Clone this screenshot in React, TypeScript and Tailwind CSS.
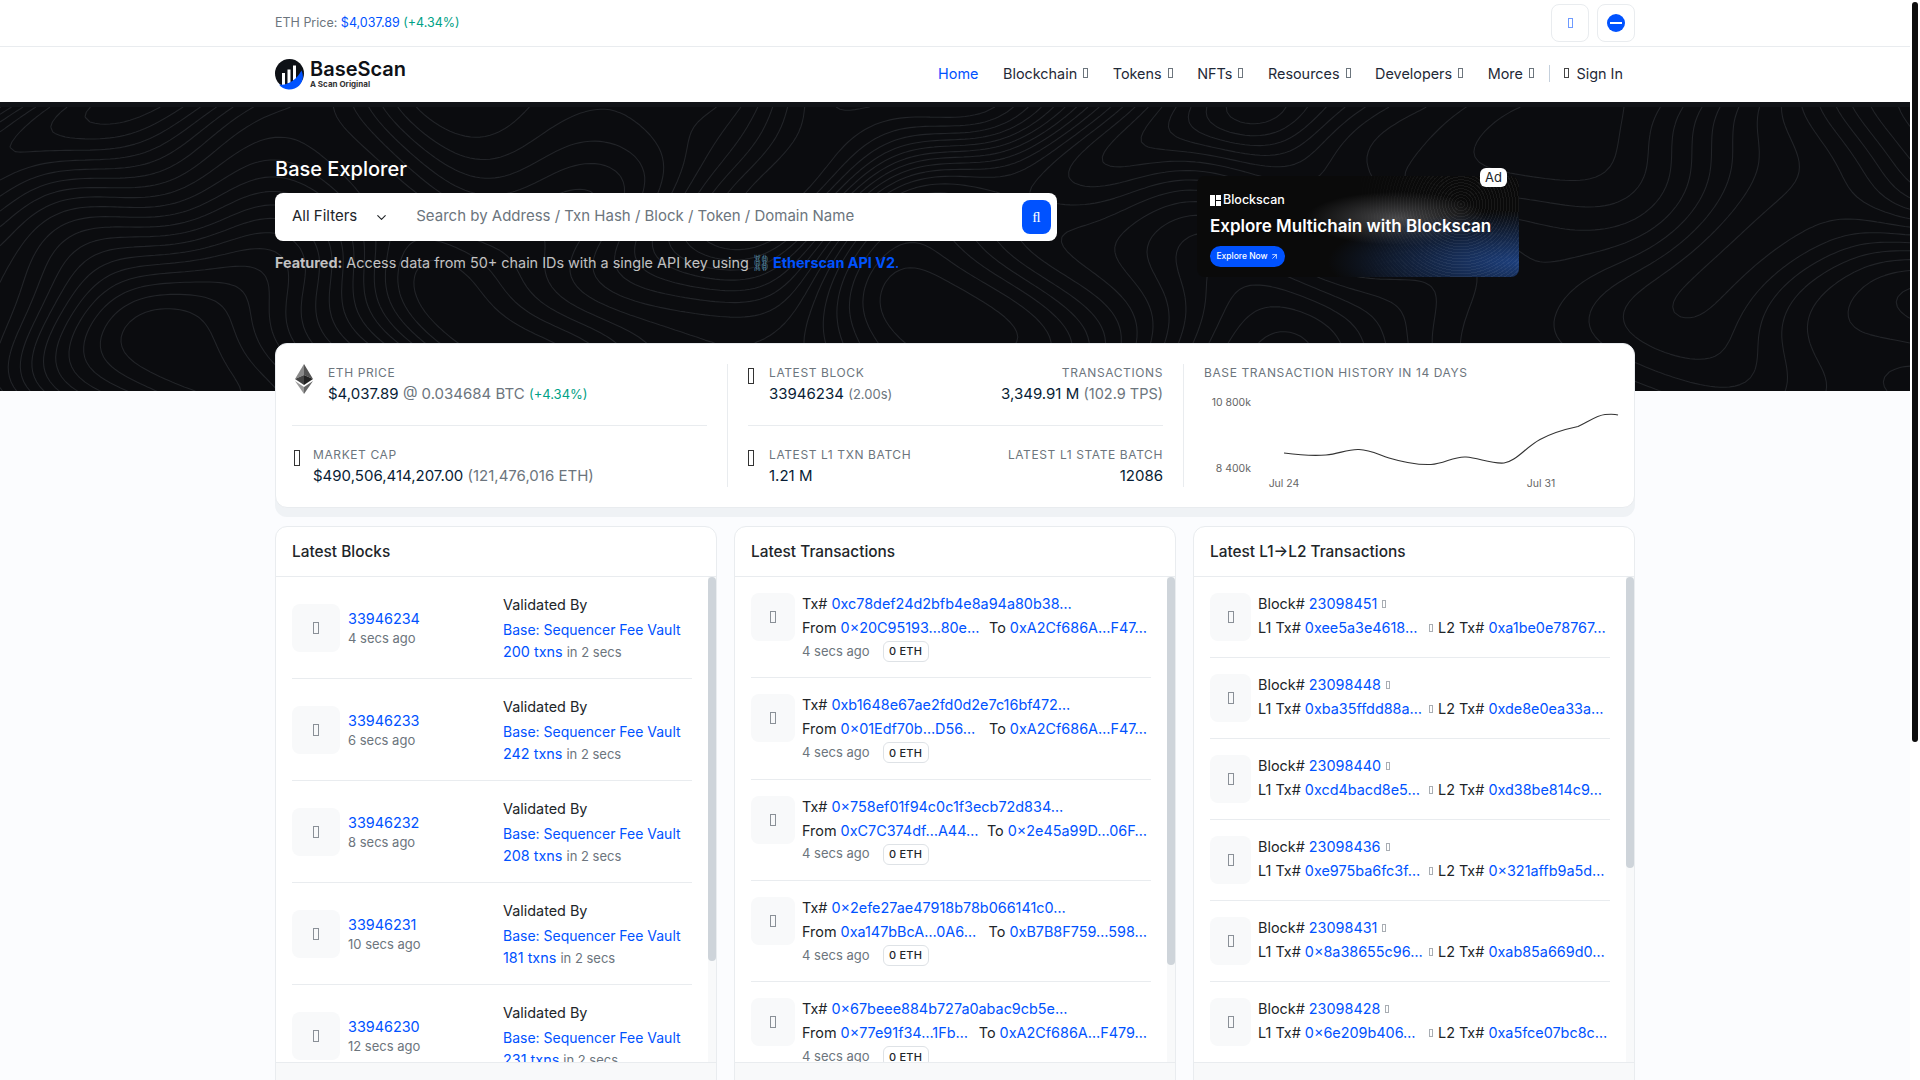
import { useMemo } from 'react';
import { ChevronDown, ArrowUpRight } from 'lucide-react';

const BLOCKS = [
  { no: '33946234', ago: '4 secs ago', txns: '200 txns' },
  { no: '33946233', ago: '6 secs ago', txns: '242 txns' },
  { no: '33946232', ago: '8 secs ago', txns: '208 txns' },
  { no: '33946231', ago: '10 secs ago', txns: '181 txns' },
  { no: '33946230', ago: '12 secs ago', txns: '231 txns' },
];

const TXS = [
  { hash: '0xc78def24d2bfb4e8a94a80b38…', from: '0×20C95193…80e…', to: '0xA2Cf686A…F47…' },
  { hash: '0xb1648e67ae2fd0d2e7c16bf472…', from: '0×01Edf70b…D56…', to: '0xA2Cf686A…F47…' },
  { hash: '0×758ef01f94c0c1f3ecb72d834…', from: '0xC7C374df…A44…', to: '0×2e45a99D…06F…' },
  { hash: '0×2efe27ae47918b78b066141c0…', from: '0xa147bBcA…0A6…', to: '0xB7B8F759…598…' },
  { hash: '0×67beee884b727a0abac9cb5e…', from: '0×77e91f34…1Fb…', to: '0xA2Cf686A…F479…' },
];

const L1L2 = [
  { block: '23098451', l1: '0xee5a3e4618…', l2: '0xa1be0e78767…' },
  { block: '23098448', l1: '0xba35ffdd88a…', l2: '0xde8e0ea33a…' },
  { block: '23098440', l1: '0xcd4bacd8e5…', l2: '0xd38be814c9…' },
  { block: '23098436', l1: '0xe975ba6fc3f…', l2: '0×321affb9a5d…' },
  { block: '23098431', l1: '0×8a38655c96…', l2: '0xab85a669d0…' },
  { block: '23098428', l1: '0×6e209b406…', l2: '0xa5fce07bc8c…' },
];

const NAV = ['Blockchain', 'Tokens', 'NFTs', 'Resources', 'Developers', 'More'];

// missing icon font glyph, shows up as an empty box in the page
function Tofu({ className }: { className: string }) {
  return <span className={`inline-block shrink-0 border ${className}`} />;
}

function IconBox({ className }: { className: string }) {
  return (
    <div className={`flex h-12 shrink-0 items-center justify-center rounded-lg bg-[#f8f9fa] ${className}`}>
      <Tofu className="h-[12px] w-[6px] border-[#8a9097]" />
    </div>
  );
}

function Logo() {
  return (
    <div className="flex items-center gap-[5px]">
      <svg width="30" height="31" viewBox="0 0 30 31" className="shrink-0">
        <circle cx="14.500" cy="14.500" r="14.500" fill="#0e1116" />
        <rect x="7" y="14" width="3" height="12" fill="#fff" />
        <rect x="12.500" y="10.500" width="3" height="14" fill="#fff" />
        <rect x="18" y="6.500" width="3" height="15" fill="#fff" />
        <path d="M4 25.500C13 27 22 20 26.500 11.500C31 21 24 31 13.500 30.500C9.500 30.200 6 28.200 4 25.500Z" fill="#0052ff" />
      </svg>
      <div className="-mt-[2px] flex flex-col">
        <span className="text-[20px] leading-[20px] font-semibold text-[#0e1116]">BaseScan</span>
        <span className="text-[8px] leading-[10px] font-bold text-[#333]">A Scan Original</span>
      </div>
    </div>
  );
}

// contour lines of a made up height field, walks the grid with marching squares
function useContours(width: number, height: number) {
  return useMemo(() => {
    const field = (x: number, y: number) => {
      const wx = x + 70 * Math.sin(y / 90) + 40 * Math.sin(y / 37 + x / 210);
      const wy = y + 60 * Math.sin(x / 120) + 26 * Math.cos(x / 47 - y / 160);
      return (
        2.4 * Math.sin(wx / 170) * Math.cos(wy / 110) +
        1.6 * Math.sin(wx / 83 + wy / 131) +
        1.1 * Math.cos(wy / 61 - wx / 240)
      );
    };
    const step = 5;
    const paths: string[] = [];
    for (let level = -4.5; level <= 4.5; level += 0.45) {
      let d = '';
      for (let x = 0; x < width; x += step) {
        for (let y = 0; y < height; y += step) {
          const a = field(x, y) - level;
          const b = field(x + step, y) - level;
          const c = field(x + step, y + step) - level;
          const e = field(x, y + step) - level;
          const pts: [number, number][] = [];
          if (a * b < 0) pts.push([x + (step * a) / (a - b), y]);
          if (b * c < 0) pts.push([x + step, y + (step * b) / (b - c)]);
          if (c * e < 0) pts.push([x + (step * e) / (e - c), y + step]);
          if (e * a < 0) pts.push([x, y + (step * a) / (a - e)]);
          if (pts.length >= 2) {
            d += `M${pts[0][0].toFixed(1)} ${pts[0][1].toFixed(1)}L${pts[1][0].toFixed(1)} ${pts[1][1].toFixed(1)}`;
          }
        }
      }
      paths.push(d);
    }
    return paths;
  }, [width, height]);
}

function Contours() {
  const paths = useContours(1910, 289);
  return (
    <svg width="1910" height="289" viewBox="0 0 1910 289" className="absolute inset-0" fill="none">
      {paths.map((d, i) => (
        <path key={i} d={d} stroke="#222428" strokeWidth="1.1" />
      ))}
    </svg>
  );
}

function EthLogo() {
  return (
    <svg width="18" height="30" viewBox="0 0 18 30" className="shrink-0">
      <polygon points="9,0 0,15 9,11" fill="#8a8a8a" />
      <polygon points="9,0 18,15 9,11" fill="#555" />
      <polygon points="0,15 9,21 9,11" fill="#444" />
      <polygon points="18,15 9,21 9,11" fill="#222" />
      <polygon points="0,17 9,30 9,23" fill="#9a9a9a" />
      <polygon points="18,17 9,30 9,23" fill="#666" />
    </svg>
  );
}

function Label({ children }: { children: React.ReactNode }) {
  return <div className="text-[12px] leading-[18px] tracking-[0.05em] text-[#6c757d] uppercase">{children}</div>;
}

function Chart() {
  return (
    <svg width="416" height="112" viewBox="0 0 416 112" className="mt-[3px] block">
      <text x="47" y="21" textAnchor="end" fontSize="10.5" fill="#666" fontFamily="Inter, sans-serif">10 800k</text>
      <text x="47" y="87" textAnchor="end" fontSize="10.5" fill="#666" fontFamily="Inter, sans-serif">8 400k</text>
      <text x="80" y="102" textAnchor="middle" fontSize="10.5" fill="#666" fontFamily="Inter, sans-serif">Jul 24</text>
      <text x="337" y="102" textAnchor="middle" fontSize="10.5" fill="#666" fontFamily="Inter, sans-serif">Jul 31</text>
      <path
        d="M80 68C95 70 110 71 122 70C135 69 143 64 155 64.500C167 65 175 70 185 73C200 77.500 215 80 227 79.500C240 79 250 71 262 72C275 73 287 79 300 78C312 76.500 322 62 336 54.500C348 48 362 44 374 41.500C385 36 394 30 401 29.500C407 29 411 29 414 30"
        fill="none"
        stroke="#333"
        strokeWidth="1.1"
      />
    </svg>
  );
}

function StatsCard() {
  return (
    <div className="relative -mt-[48px] flex h-[165px] rounded-xl border border-[#e9ecef] bg-white py-[20px] pl-[16px] shadow-[0_9px_0_#eff2f5]">
      <div className="flex w-[436px] shrink-0 flex-col border-r border-[#e9ecef] pr-[20px]">
        <div className="flex h-[66px] gap-[15px] border-b border-[#e9ecef]">
          <div className="pl-[3px]">
            <EthLogo />
          </div>
          <div>
            <Label>ETH Price</Label>
            <div className="mt-[1px] text-[15px] leading-[22px] text-[#6c757d]">
              <span className="text-[#081d35]">$4,037.89</span> @ 0.034684 BTC{' '}
              <span className="text-[13px] text-[#00a186]">(+4.34%)</span>
            </div>
          </div>
        </div>
        <div className="flex gap-[13px] pt-[20px]">
          <Tofu className="mt-[4px] ml-[2px] h-[16px] w-[6px] border-[#333]" />
          <div>
            <Label>Market Cap</Label>
            <div className="mt-[1px] text-[15px] leading-[22px] text-[#6c757d]">
              <span className="text-[#081d35]">$490,506,414,207.00</span> (121,476,016 ETH)
            </div>
          </div>
        </div>
      </div>
      <div className="flex w-[456px] shrink-0 flex-col border-r border-[#e9ecef] px-[20px]">
        <div className="flex h-[66px] justify-between border-b border-[#e9ecef]">
          <div className="flex gap-[15px]">
            <Tofu className="mt-[4px] h-[16px] w-[6px] border-[#333]" />
            <div>
              <Label>Latest Block</Label>
              <div className="mt-[1px] text-[15px] leading-[22px] text-[#081d35]">
                33946234 <span className="text-[13px] text-[#6c757d]">(2.00s)</span>
              </div>
            </div>
          </div>
          <div className="text-right">
            <Label>Transactions</Label>
            <div className="mt-[1px] text-[15px] leading-[22px] text-[#081d35]">
              3,349.91 M <span className="text-[14.5px] text-[#6c757d]">(102.9 TPS)</span>
            </div>
          </div>
        </div>
        <div className="flex justify-between pt-[20px]">
          <div className="flex gap-[15px]">
            <Tofu className="mt-[4px] h-[16px] w-[6px] border-[#333]" />
            <div>
              <Label>Latest L1 Txn Batch</Label>
              <div className="mt-[1px] text-[15px] leading-[22px] text-[#081d35]">1.21 M</div>
            </div>
          </div>
          <div className="text-right">
            <Label>Latest L1 State Batch</Label>
            <div className="mt-[1px] text-[15px] leading-[22px] text-[#081d35]">12086</div>
          </div>
        </div>
      </div>
      <div className="min-w-0 flex-1 pl-[20px]">
        <Label>Base Transaction History in 14 Days</Label>
        <Chart />
      </div>
    </div>
  );
}

function PanelCard({ title, thumb, children }: { title: string; thumb: string; children: React.ReactNode }) {
  return (
    <div className="overflow-hidden rounded-t-xl border border-[#e9ecef] bg-white">
      <div className="flex h-[50px] items-center border-b border-[#e9ecef] px-4 text-[15.4px] font-medium text-[#212529]">
        {title}
      </div>
      <div className="flex h-[485px]">
        <div className="min-w-0 flex-1 overflow-hidden px-4">{children}</div>
        <div className="w-[8px] shrink-0 bg-[#f8f9fa]">
          <div className={`w-[8px] rounded-full bg-[#ced4da] ${thumb}`} />
        </div>
      </div>
      <div className="h-[48px] border-t border-[#e9ecef] bg-[#f8f9fa]" />
    </div>
  );
}

function BlockRow({ no, ago, txns }: { no: string; ago: string; txns: string }) {
  return (
    <div className="flex h-[102px] items-center border-b border-[#e9ecef]">
      <div className="flex w-[211px] shrink-0 items-center gap-[8px]">
        <IconBox className="w-12" />
        <div>
          <div className="pt-[1px] text-[14.4px] leading-[20px] text-[#0052ff]">{no}</div>
          <div className="text-[13px] leading-[19px] text-[#6c757d]">{ago}</div>
        </div>
      </div>
      <div className="pt-[1px]">
        <div className="text-[14.4px] leading-[24px] text-[#212529]">Validated By</div>
        <div className="mt-[2px] text-[14px] leading-[22px] text-[#0052ff]">Base: Sequencer Fee Vault</div>
        <div className="text-[14.4px] leading-[22px] text-[#0052ff]">
          {txns} <span className="text-[13px] text-[#6c757d]">in 2 secs</span>
        </div>
      </div>
    </div>
  );
}

function TxRow({ hash, from, to }: { hash: string; from: string; to: string }) {
  return (
    <div className="flex h-[101.33px] gap-[7px] border-b border-[#e9ecef] pt-4">
      <IconBox className="w-[44px]" />
      <div className="min-w-0 flex-1 pr-[4px]">
        <div className="h-[22px] text-[14.4px] leading-[22px] text-[#212529]">
          Tx# <span className="text-[#0052ff]">{hash}</span>
        </div>
        <div className="flex h-[25px] justify-between text-[14.4px] leading-[25px] whitespace-nowrap text-[#212529]">
          <span>
            From <span className="text-[#0052ff]">{from}</span>
          </span>
          <span>
            To <span className="text-[#0052ff]">{to}</span>
          </span>
        </div>
        <div className="flex h-[23px] items-center gap-[13px]">
          <span className="text-[13px] text-[#6c757d]">4 secs ago</span>
          <span className="flex h-[21px] w-[46px] items-center justify-center rounded-md border border-[#dee2e6] text-[11px] font-medium tracking-[0.02em] text-[#212529]">
            0 ETH
          </span>
        </div>
      </div>
    </div>
  );
}

function L1L2Row({ block, l1, l2 }: { block: string; l1: string; l2: string }) {
  return (
    <div className="flex h-[81px] gap-[7px] border-b border-[#e9ecef] pt-4">
      <IconBox className="w-[41px]" />
      <div className="min-w-0 flex-1">
        <div className="flex h-[22px] items-center gap-[5px] text-[14.4px] leading-[22px] text-[#212529]">
          <span>
            Block# <span className="text-[#0052ff]">{block}</span>
          </span>
          <Tofu className="h-[8px] w-[4px] border-[#a8adb3]" />
        </div>
        <div className="flex h-[25px] items-center text-[14.4px] leading-[25px] whitespace-nowrap text-[#212529]">
          <span className="w-[171px] shrink-0">
            L1 Tx# <span className="text-[#0052ff]">{l1}</span>
          </span>
          <Tofu className="mr-[5px] h-[8px] w-[4px] border-[#a8adb3]" />
          <span>
            L2 Tx# <span className="text-[#0052ff]">{l2}</span>
          </span>
        </div>
      </div>
    </div>
  );
}

export default function App() {
  return (
    <div className="flex h-screen overflow-hidden bg-white font-['Inter',sans-serif]">
      <div className="h-full min-w-0 flex-1 overflow-hidden bg-[#fbfcfe]">
        {/* top bar */}
        <div className="h-[47px] border-b border-[#e9ecef] bg-white">
          <div className="mx-auto flex h-[46px] w-[1360px] items-center justify-between">
            <div className="text-[12.5px] text-[#6c757d]">
              ETH Price: <span className="text-[#0052ff]">$4,037.89</span>{' '}
              <span className="text-[#00a186]">(+4.34%)</span>
            </div>
            <div className="flex gap-[8px]">
              <div className="flex h-[38px] w-[38px] items-center justify-center rounded-lg border border-[#e9ecef]">
                <Tofu className="h-[10px] w-[5px] border-[#6f9bff]" />
              </div>
              <div className="flex h-[38px] w-[38px] items-center justify-center rounded-lg border border-[#e9ecef]">
                <div className="flex h-[18px] w-[18px] items-center justify-center rounded-full bg-[#0052ff]">
                  <div className="h-[2px] w-[12px] bg-white" />
                </div>
              </div>
            </div>
          </div>
        </div>

        {/* main nav */}
        <div className="h-[55px] bg-white">
          <div className="mx-auto flex h-full w-[1360px] items-center justify-between pr-[12px]">
            <Logo />
            <div className="-mt-[2px] flex items-center gap-[24.6px] text-[14.4px] text-[#1f2937]">
              <span className="text-[#0052ff]">Home</span>
              {NAV.map((item) => (
                <span key={item} className="flex items-center gap-[6px]">
                  {item}
                  <Tofu className="h-[10px] w-[5px] border-[#6c757d]" />
                </span>
              ))}
              <span className="-ml-[10px] flex items-center">
                <span className="h-[17px] border-l border-[#c5d0dc]" />
                <Tofu className="mr-[8px] ml-[14px] h-[10px] w-[5px] border-[#444]" />
                Sign In
              </span>
            </div>
          </div>
        </div>

        {/* hero */}
        <div className="relative h-[289px] overflow-hidden border-t-[5px] border-[#111317] bg-[#0b0c0f]">
          <Contours />
          <div className="relative mx-auto flex w-[1360px] pt-[48px]">
            <div className="w-[782px] shrink-0">
              <h1 className="h-[28px] text-[20px] leading-[28px] font-medium text-white">Base Explorer</h1>
              <div className="mt-[10px] flex h-[48px] items-center rounded-lg bg-white pr-[6px] pl-[17px]">
                <span className="-mt-[2px] text-[15px] text-[#212529]">All Filters</span>
                <ChevronDown className="ml-[17px] h-[15px] w-[15px] text-[#212529]" strokeWidth={1.8} />
                <span className="-mt-[2px] ml-[27px] flex-1 text-[15px] text-[#6c757d]">
                  Search by Address / Txn Hash / Block / Token / Domain Name
                </span>
                <div className="flex h-[34px] w-[29px] items-center justify-center rounded-lg bg-[#0052ff] font-['Liberation_Serif',serif] text-[15px] text-white">
                  ﬂ
                </div>
              </div>
              <p className="mt-[11px] text-[14.4px] leading-[22px] text-white/75">
                <b className="font-bold">Featured:</b> Access data from 50+ chain IDs with a single API key using{' '}
                <span className="-mr-[2px] -ml-[2px] inline-block text-[16px] leading-[16px] text-[#5a8fae]">⛓</span>{' '}
                <span className="font-bold text-[#0052ff]">Etherscan API V2</span>
                <span className="text-[#0052ff]">.</span>
              </p>
            </div>
            <div className="relative mt-[21px] ml-[140px] flex h-[101px] w-[322px] shrink-0 flex-col overflow-visible rounded-lg bg-[#0a0a0a] bg-[radial-gradient(ellipse_at_100%_85%,#1d3f7c_0%,transparent_42%),radial-gradient(ellipse_at_62%_42%,#48484a_0%,transparent_32%)] pt-[16px] pl-[13px]">
              <div className="absolute inset-0 rounded-lg bg-[repeating-radial-gradient(circle_at_82%_28%,rgba(255,255,255,0.06)_0_1px,transparent_1px_3px)] [mask-image:linear-gradient(90deg,transparent_48%,black_78%)]" />
              <span className="absolute -top-[8px] right-[12px] rounded-md bg-white px-[5px] text-[13px] leading-[19px] text-[#212529]">
                Ad
              </span>
              <div className="relative flex items-center gap-[2px]">
                <span className="grid h-[11px] w-[11px] grid-cols-2 gap-[1px]">
                  <span className="row-span-2 bg-white" />
                  <span className="bg-white" />
                  <span className="bg-white" />
                </span>
                <span className="text-[12.5px] leading-[16px] font-medium text-white">Blockscan</span>
              </div>
              <div className="relative mt-[6px] text-[17px] leading-[24px] font-semibold text-white">
                Explore Multichain with Blockscan
              </div>
              <div className="relative mt-[7.5px] flex h-[21px] w-[75px] items-center justify-center gap-[2px] rounded-full bg-[#0052ff] text-[8.5px] font-medium text-white">
                Explore Now <ArrowUpRight className="h-[9px] w-[9px]" />
              </div>
            </div>
          </div>
        </div>

        <div className="mx-auto w-[1360px]">
          <StatsCard />
          <div className="mt-[18px] grid grid-cols-3 gap-[17px]">
            <PanelCard title="Latest Blocks" thumb="h-[384px]">
              {BLOCKS.map((b) => (
                <BlockRow key={b.no} {...b} />
              ))}
            </PanelCard>
            <PanelCard title="Latest Transactions" thumb="h-[388px]">
              {TXS.map((t) => (
                <TxRow key={t.hash} {...t} />
              ))}
            </PanelCard>
            <PanelCard title="Latest L1→L2 Transactions" thumb="h-[291px]">
              {L1L2.map((r) => (
                <L1L2Row key={r.block} {...r} />
              ))}
            </PanelCard>
          </div>
        </div>
      </div>

      {/* page scrollbar */}
      <div className="w-[10px] shrink-0 bg-white">
        <div className="mx-[2px] mt-[2px] h-[740px] w-[6px] rounded-full bg-[#0d0d0d]" />
      </div>
    </div>
  );
}
